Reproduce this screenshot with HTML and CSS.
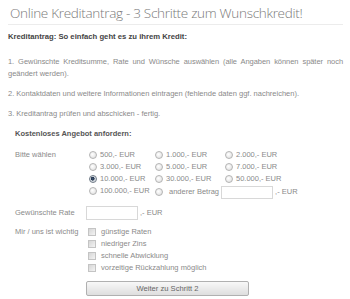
FILE: index.html
```html
<!DOCTYPE html>
<html lang="de">
<head>
    <meta charset="UTF-8">
    <meta name="viewport" content="width=device-width, initial-scale=1.0">
    <title>Online Kreditantrag</title>
    <link rel="stylesheet" href="styles.css">
</head>
<body>
    <h1 class="title">Online Kreditantrag - 3 Schritte zum Wunschkredit!</h1>

    <section class="intro">
        <p class="lead">Kreditantrag: So einfach geht es zu ihrem Kredit:</p>
        <p><span class="first-line">1. Gewünschte Kreditsumme, Rate und Wünsche auswählen (alle Angaben können später noch</span> geändert werden).</p>
        <p>2. Kontaktdaten und weitere Informationen eintragen (fehlende daten ggf. nachreichen).</p>
        <p>3. Kreditantrag prüfen und abschicken - fertig.</p>
    </section>

    <form class="offer">
        <p class="offer-head">Kostenloses Angebot anfordern:</p>

        <div class="field">
            <span class="field-label">Bitte wählen</span>
            <div class="amounts">
                <label class="opt"><input type="radio" name="betrag">500,- EUR</label>
                <label class="opt"><input type="radio" name="betrag">1.000,- EUR</label>
                <label class="opt"><input type="radio" name="betrag">2.000,- EUR</label>
                <label class="opt"><input type="radio" name="betrag">3.000,- EUR</label>
                <label class="opt"><input type="radio" name="betrag">5.000,- EUR</label>
                <label class="opt"><input type="radio" name="betrag">7.000,- EUR</label>
                <label class="opt"><input type="radio" name="betrag" checked>10.000,- EUR</label>
                <label class="opt"><input type="radio" name="betrag">30.000,- EUR</label>
                <label class="opt"><input type="radio" name="betrag">50.000,- EUR</label>
                <label class="opt"><input type="radio" name="betrag">100.000,- EUR</label>
                <div class="opt other">
                    <input type="radio" name="betrag">
                    <span class="other-label">anderer Betrag</span>
                    <input type="text" class="box other-box">
                    <span>,- EUR</span>
                </div>
            </div>
        </div>

        <div class="field rate">
            <span class="field-label">Gewünschte Rate</span>
            <input type="text" class="box rate-box">
            <span>,- EUR</span>
        </div>

        <div class="field">
            <span class="field-label">Mir / uns ist wichtig</span>
            <div class="checks">
                <label class="check"><input type="checkbox">günstige Raten</label>
                <label class="check"><input type="checkbox">niedriger Zins</label>
                <label class="check"><input type="checkbox">schnelle Abwicklung</label>
                <label class="check"><input type="checkbox">vorzeitige Rückzahlung möglich</label>
            </div>
        </div>

        <div class="field send">
            <span class="field-label"></span>
            <button type="button" class="next-btn">Weiter zu Schritt 2</button>
        </div>
    </form>
</body>
</html>
```

FILE: styles.css
```css
body {
    margin: 0;
    padding: 0 7px 0 8px;
    background-color: #fff;
    font-family: "Liberation Sans", Arial, sans-serif;
    font-size: 7.5px;
    color: #8a8a8a;
}
.title {
    margin: 0;
    padding: 5px 0 3px 2px;
    font-family: "Open Sans", sans-serif;
    font-weight: 300;
    font-size: 13.5px;
    letter-spacing: -0.3px;
    line-height: 16px;
    color: #7a7a7a;
    border-bottom: 1px solid #ececec;
}
.intro p {
    margin: 0 0 8px 0;
    line-height: 12px;
    text-align: justify;
}
/* erste Zeile immer bis "noch", auf volle Breite verteilt */
.intro .first-line {
    display: block;
    white-space: nowrap;
    text-align-last: justify;
    letter-spacing: -0.05px;
}
.intro .lead {
    margin: 6px 0 13px 0;
    font-weight: bold;
    font-size: 7.7px;
    color: #444;
}
.offer {
    padding-left: 7px;
    margin-top: 8px;
}
.offer-head {
    margin: 0 0 9px 0;
    font-weight: bold;
    color: #555;
    line-height: 12px;
}
.field {
    display: flex;
    align-items: flex-start;
    margin-bottom: 7px;
    line-height: 12px;
}
.field-label {
    width: 71px;
    flex-shrink: 0;
}
.amounts {
    display: grid;
    grid-template-columns: 66px 70px 70px;
    padding-left: 3px;
}
.opt {
    display: flex;
    align-items: center;
    height: 12px;
    white-space: nowrap;
}
.opt.other {
    grid-column: 2 / 4;
    height: 14px;
}
.other-label {
    margin-left: 3px;
    margin-right: 2px;
}
input[type="radio"] {
    appearance: none;
    width: 8px;
    height: 8px;
    margin: 0 3px 0 0;
    border: 1px solid #b4b4b4;
    border-radius: 50%;
    background: radial-gradient(circle at 40% 40%, #ffffff 0, #e6e6e6 70%, #d2d2d2 100%);
    box-sizing: border-box;
    flex-shrink: 0;
}
input[type="radio"]:checked {
    border-color: #6f7a86;
    background: radial-gradient(circle at 45% 45%, #3f5a78 0, #22324a 35%, #cfd6dd 45%, #eef0f2 100%);
}
.box {
    height: 13px;
    margin: 0 2px 0 0;
    padding: 0;
    border: 1px solid #d8d8d8;
    box-sizing: border-box;
    font-size: 7px;
    background: #fff;
    flex-shrink: 0;
}
.other-box {
    width: 52px;
}
.rate {
    align-items: center;
    margin-bottom: 6px;
}
.rate-box {
    width: 52px;
    height: 14px;
}
.checks {
    display: flex;
    flex-direction: column;
    padding-left: 2px;
}
.check {
    display: flex;
    align-items: center;
    height: 12px;
    white-space: nowrap;
}
input[type="checkbox"] {
    appearance: none;
    width: 8px;
    height: 8px;
    margin: 0 5px 0 0;
    border: 1px solid #c4c4c4;
    background: linear-gradient(135deg, #d6d6d6, #f4f4f4);
    box-sizing: border-box;
    flex-shrink: 0;
}
.send {
    margin-top: 7px;
}
.next-btn {
    width: 163px;
    height: 15px;
    padding: 0;
    border: 1px solid #b0b0b0;
    border-radius: 2px;
    background: linear-gradient(#f8f8f8, #dedede);
    font-family: "Liberation Sans", Arial, sans-serif;
    font-size: 7.6px;
    color: #666;
}
```
